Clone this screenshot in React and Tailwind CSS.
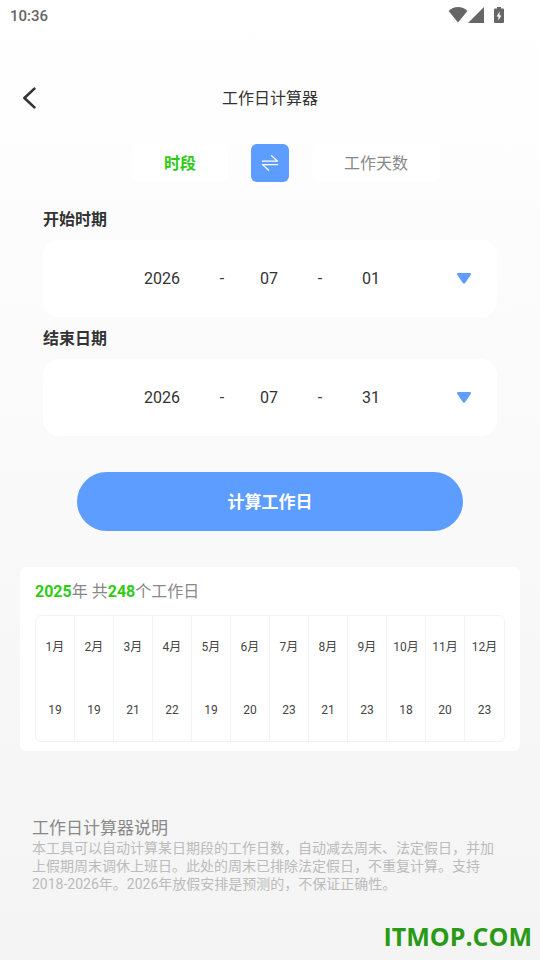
import { useState } from 'react';

const MONTH_DAYS = [19, 19, 21, 22, 19, 20, 23, 21, 23, 18, 20, 23];

const YEARS = Array.from({ length: 9 }, (_, i) => String(2018 + i));
const MONTHS = Array.from({ length: 12 }, (_, i) => String(i + 1).padStart(2, '0'));
const DAYS = Array.from({ length: 31 }, (_, i) => String(i + 1).padStart(2, '0'));

const StatusBar = () => (
  <div className="flex h-[30px] items-center justify-between pl-[10px] pr-9 text-[#666666]">
    <span className="pt-0.5 text-[15px] font-medium">10:36</span>
    <div className="flex items-center">
      <svg className="h-4 w-5" viewBox="0 0 20 16" fill="currentColor" aria-hidden="true">
        <path d="M10 15.4 0.6 4C3.2 1.4 6.4 0 10 0s6.8 1.4 9.4 4z" />
      </svg>
      <svg className="h-4 w-4" viewBox="0 0 16 16" fill="currentColor" aria-hidden="true">
        <path d="M16 0v16H0z" />
      </svg>
      <svg className="ml-[10px] h-4 w-[10px]" viewBox="0 0 10 16" fill="currentColor" aria-hidden="true">
        <path
          fillRule="evenodd"
          d="M3 0h4v1.4h2a1 1 0 0 1 1 1V15a1 1 0 0 1-1 1H1a1 1 0 0 1-1-1V2.4a1 1 0 0 1 1-1h2zM5.6 4.6 2.6 9.6h1.8V13.4l3-5h-1.8z"
        />
      </svg>
    </div>
  </div>
);

const PartSelect = ({ label, value, options, onChange, className }) => (
  <select
    aria-label={label}
    value={value}
    onChange={(e) => onChange(e.target.value)}
    className={`h-8 cursor-pointer appearance-none bg-transparent text-center [text-align-last:center] outline-none ${className}`}
  >
    {options.map((option) => (
      <option key={option} value={option}>
        {option}
      </option>
    ))}
  </select>
);

const DateField = ({ title, date, onChange }) => {
  const update = (key) => (value) => onChange({ ...date, [key]: value });

  return (
    <fieldset>
      <legend className="mb-[7px] text-base leading-[26px] font-bold">{title}</legend>
      <div className="flex h-[77px] items-center rounded-2xl bg-white pr-[26px] pl-5 text-base">
        <div className="flex flex-1 items-center justify-center">
          <PartSelect label={`${title} 年`} value={date.year} options={YEARS} onChange={update('year')} className="w-[72px]" />
          <span className="w-12 text-center">-</span>
          <PartSelect label={`${title} 月`} value={date.month} options={MONTHS} onChange={update('month')} className="w-[46px]" />
          <span className="w-14 text-center">-</span>
          <PartSelect label={`${title} 日`} value={date.day} options={DAYS} onChange={update('day')} className="w-[46px]" />
        </div>
        <button type="button" aria-label={`选择${title}`} className="text-[#5c9dff]">
          <svg className="h-[11px] w-[14px]" viewBox="0 0 14 11" fill="currentColor" aria-hidden="true">
            <path d="M0.6 0h12.8q0.8 0.6 0.4 1.8L8.2 10q-1.2 1.6-2.4 0L0.2 1.8Q-0.2 0.6 0.6 0z" />
          </svg>
        </button>
      </div>
    </fieldset>
  );
};

const App = () => {
  const [mode, setMode] = useState('range');
  const [start, setStart] = useState({ year: '2026', month: '07', day: '01' });
  const [end, setEnd] = useState({ year: '2026', month: '07', day: '31' });

  const tabColor = (name) => (mode === name ? 'font-bold text-[#2fcb14]' : 'text-[#888888]');

  return (
    <div className="flex min-h-screen flex-col bg-linear-to-b from-white to-[#f4f4f4] font-[Roboto,'Noto_Sans_CJK_SC',sans-serif] text-[#333333]">
      <StatusBar />

      <header className="mt-[50px] grid h-9 grid-cols-[40px_1fr_40px] items-center px-3">
        <button type="button" aria-label="返回" className="pl-[10px]">
          <svg className="h-[22px] w-[14px]" viewBox="0 0 14 22" fill="none" stroke="currentColor" strokeWidth="2.6" strokeLinecap="round" strokeLinejoin="round" aria-hidden="true">
            <path d="M12.4 1.6 2.4 11l10 9.4" />
          </svg>
        </button>
        <h1 className="pt-0.5 text-center text-base">工作日计算器</h1>
      </header>

      <div className="mt-7 grid grid-cols-[1fr_auto_1fr] items-center gap-[23px]">
        <button
          type="button"
          onClick={() => setMode('range')}
          className={`h-[38px] justify-self-end rounded-md bg-white px-8 pt-0.5 text-base ${tabColor('range')}`}
        >
          时段
        </button>
        <button
          type="button"
          aria-label="切换"
          onClick={() => setMode(mode === 'range' ? 'days' : 'range')}
          className="flex size-[38px] items-center justify-center rounded-md bg-[#5c9dff] text-white"
        >
          <svg className="h-4 w-[18px]" viewBox="0 0 18 16" fill="none" stroke="currentColor" strokeWidth="1.3" strokeLinecap="round" strokeLinejoin="round" aria-hidden="true">
            <path d="M1.4 6.2h15.2L10.6 0.8M16.6 9.6H1.4L7.6 15.2" />
          </svg>
        </button>
        <button
          type="button"
          onClick={() => setMode('days')}
          className={`h-[38px] justify-self-start rounded-md bg-white px-8 pt-0.5 text-base ${tabColor('days')}`}
        >
          工作天数
        </button>
      </div>

      <main>
        <div className="mt-[25px] flex flex-col gap-[9px] px-[43px]">
          <DateField title="开始时期" date={start} onChange={setStart} />
          <DateField title="结束日期" date={end} onChange={setEnd} />
        </div>

        <div className="mt-9 px-[77px]">
          <button type="button" className="h-[59px] w-full rounded-full bg-[#5c9dff] pt-0.5 text-[17px] font-bold text-white">
            计算工作日
          </button>
        </div>

        <section className="mx-5 mt-9 rounded-md bg-white px-[15px] pt-3 pb-[9px]">
          <h2 className="mb-[10px] text-base leading-[26px] text-[#888888]">
            <b className="text-[#2fcb14]">2025</b>年 共<b className="text-[#2fcb14]">248</b>个工作日
          </h2>
          <table className="w-full table-fixed border-separate border-spacing-0 rounded-md border border-[#f3f3f3] text-center text-xs text-[#444444]">
            <thead>
              <tr>
                {MONTH_DAYS.map((_, i) => (
                  <th key={i} scope="col" className="h-[62px] border-r border-[#f3f3f3] p-0 font-normal whitespace-nowrap last:border-r-0">
                    {i + 1}月
                  </th>
                ))}
              </tr>
            </thead>
            <tbody>
              <tr>
                {MONTH_DAYS.map((days, i) => (
                  <td key={i} className="h-[63px] border-r border-[#f3f3f3] p-0 last:border-r-0">
                    {days}
                  </td>
                ))}
              </tr>
            </tbody>
          </table>
        </section>

        <section className="mt-[66px] pr-10 pl-8">
          <h2 className="text-[17px] leading-[22px] text-[#888888]">工作日计算器说明</h2>
          <p className="text-sm leading-[18px] text-[#bbbbbb]">
            本工具可以自动计算某日期段的工作日数，自动减去周末、法定假日，并加上假期周末调休上班日。此处的周末已排除法定假日，不重复计算。支持2018-2026年。2026年放假安排是预测的，不保证正确性。
          </p>
        </section>
      </main>

      <footer className="mt-auto pr-2 pb-1.5 text-right">
        <a href="#" className="font-['Open_Sans',sans-serif] text-[25px] leading-9 font-bold text-[#2a9a16]">
          ITMOP.COM
        </a>
      </footer>
    </div>
  );
};

export default App;
